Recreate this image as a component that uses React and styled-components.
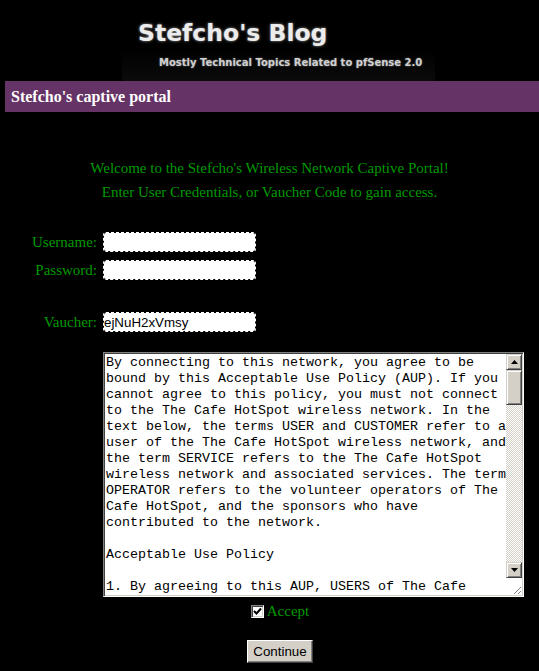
import React from "react";
import styled, { createGlobalStyle } from "styled-components";

const GlobalStyle = createGlobalStyle`
  html, body {
    margin: 0;
    padding: 0;
    background: #000;
  }
  body {
    font-family: "Liberation Serif", "Times New Roman", serif;
  }
`;

const aupText = `By connecting to this network, you agree to be bound by this Acceptable Use Policy (AUP). If you cannot agree to this policy, you must not connect to the The Cafe HotSpot wireless network. In the text below, the terms USER and CUSTOMER refer to a user of the The Cafe HotSpot wireless network, and the term SERVICE refers to the The Cafe HotSpot wireless network and associated services. The term OPERATOR refers to the volunteer operators of The Cafe HotSpot, and the sponsors who have contributed to the network.

Acceptable Use Policy

1. By agreeing to this AUP, USERS of The Cafe`;

function App() {
  return (
    <Page>
      <GlobalStyle />
      <Banner>
        <BannerArt>
          <BlogTitle>Stefcho's Blog</BlogTitle>
          <BlogTagline>Mostly Technical Topics Related to pfSense 2.0</BlogTagline>
        </BannerArt>
      </Banner>

      <PortalBar>Stefcho's captive portal</PortalBar>

      <Welcome>
        Welcome to the Stefcho's Wireless Network Captive Portal!
        <br />
        Enter User Credentials, or Vaucher Code to gain access.
      </Welcome>

      <LoginForm onSubmit={(e) => e.preventDefault()}>
        <FieldLabel>Username:</FieldLabel>
        <TextInput type="text" name="auth_user" />
        <FieldLabel>Password:</FieldLabel>
        <TextInput type="password" name="auth_pass" />
        <FieldLabel $spaced>Vaucher:</FieldLabel>
        <TextInput type="text" name="auth_voucher" defaultValue="ejNuH2xVmsy" $spaced />

        <PolicyBox>
          <PolicyText>{aupText}</PolicyText>
          <ScrollBar>
            <ScrollButton>
              <Arrow viewBox="0 0 7 4">
                <path d="M3.5 0 L7 4 L0 4 Z" />
              </Arrow>
            </ScrollButton>
            <ScrollThumb />
            <ScrollTrack />
            <ScrollButton>
              <Arrow viewBox="0 0 7 4">
                <path d="M0 0 L7 0 L3.5 4 Z" />
              </Arrow>
            </ScrollButton>
            <ResizeCorner>
              <svg width="12" height="12" viewBox="0 0 12 12">
                <path d="M11 4 L4 11 M11 8 L8 11" stroke="#808080" strokeWidth="1" />
              </svg>
            </ResizeCorner>
          </ScrollBar>
        </PolicyBox>
      </LoginForm>

      <Footer>
        <AcceptRow>
          <CheckBox>
            <svg width="9" height="9" viewBox="0 0 9 9">
              <path d="M1 4 L3.5 6.5 L8 1.5" stroke="#000" strokeWidth="2" fill="none" />
            </svg>
          </CheckBox>
          <AcceptLabel>Accept</AcceptLabel>
        </AcceptRow>
        <ContinueButton type="button">Continue</ContinueButton>
      </Footer>
    </Page>
  );
}

const Page = styled.div`
  width: 539px;
  min-height: 671px;
  background: #000;
`;

const Banner = styled.header`
  height: 81px;
  padding-left: 122px;
`;

const BannerArt = styled.div`
  width: 313px;
  height: 81px;
  padding: 20px 0 0 16px;
  box-sizing: border-box;
  background: linear-gradient(to bottom, #000 0%, #000 62%, #0b0b0b 100%);
`;

const BlogTitle = styled.h1`
  margin: 0;
  font-family: "DejaVu Sans", Verdana, sans-serif;
  font-weight: 700;
  font-size: 23.5px;
  line-height: 27px;
  color: #ececec;
  text-shadow: 0 0 3px rgba(255, 255, 255, 0.6);
`;

const BlogTagline = styled.div`
  margin: 10px 0 0 21px;
  font-family: "DejaVu Sans", Verdana, sans-serif;
  font-weight: 700;
  font-size: 10px;
  line-height: 12px;
  color: #cfcfcf;
  text-shadow: 0 0 2px rgba(255, 255, 255, 0.45);
  white-space: nowrap;
`;

const PortalBar = styled.div`
  margin-left: 5px;
  height: 31px;
  padding-left: 6px;
  background: #663366;
  color: #fff;
  font-weight: 700;
  font-size: 16px;
  line-height: 31px;
`;

const Welcome = styled.p`
  margin: 44px 0 0;
  text-align: center;
  color: #009900;
  font-size: 15px;
  line-height: 24px;
`;

const LoginForm = styled.form`
  margin-top: 28px;
  display: grid;
  grid-template-columns: 97px auto;
  column-gap: 6px;
  row-gap: 8px;
  justify-content: start;
  align-items: center;
`;

const FieldLabel = styled.label`
  text-align: right;
  color: #009900;
  font-size: 15px;
  line-height: 20px;
  margin-top: ${(p) => (p.$spaced ? "24px" : "0")};
`;

const TextInput = styled.input`
  width: 153px;
  height: 20px;
  box-sizing: border-box;
  margin: ${(p) => (p.$spaced ? "24px" : "0")} 0 0;
  padding: 0 1px 0 0;
  border: 1px dashed #fff;
  border-radius: 3px;
  background: #fff;
  background-clip: padding-box;
  font-family: "Liberation Sans", Arial, sans-serif;
  font-size: 13.33px;
  color: #000;
  outline: none;
  justify-self: start;
`;

const PolicyBox = styled.div`
  grid-column: 2;
  margin-top: 12px;
  display: flex;
  width: 421px;
  height: 245px;
  box-sizing: border-box;
  border: 1px solid;
  border-color: #808080 #fff #fff #808080;
  box-shadow: inset 1px 1px #404040, inset -1px -1px #d4d0c8;
  padding: 1px;
  background: #fff;
`;

const PolicyText = styled.div`
  width: 401px;
  padding: 1px 0 0 1px;
  overflow: hidden;
  white-space: pre-wrap;
  font-family: "Liberation Mono", "Courier New", monospace;
  font-size: 13.33px;
  line-height: 16px;
  color: #000;
`;

const ScrollBar = styled.div`
  width: 16px;
  display: flex;
  flex-direction: column;
`;

const ScrollButton = styled.div`
  width: 16px;
  height: 16px;
  box-sizing: border-box;
  display: flex;
  align-items: center;
  justify-content: center;
  background: #d4d0c8;
  border: 1px solid;
  border-color: #d4d0c8 #404040 #404040 #d4d0c8;
  box-shadow: inset 1px 1px #fff, inset -1px -1px #808080;
`;

const Arrow = styled.svg`
  width: 7px;
  height: 4px;
  fill: #000;
`;

const ScrollThumb = styled(ScrollButton)`
  height: 35px;
`;

const ScrollTrack = styled.div`
  flex: 1;
  background: repeating-conic-gradient(#fff 0 25%, #d4d0c8 0 50%) 0 0 / 2px 2px;
`;

const ResizeCorner = styled.div`
  height: 17px;
  display: flex;
  align-items: flex-end;
  justify-content: flex-end;
  background: #fff;
`;

const Footer = styled.div`
  padding-left: 21px;
  display: flex;
  flex-direction: column;
  align-items: center;
`;

const AcceptRow = styled.div`
  margin-top: 4px;
  display: flex;
  align-items: center;
  gap: 3px;
  height: 20px;
`;

const CheckBox = styled.span`
  width: 13px;
  height: 13px;
  box-sizing: border-box;
  display: flex;
  align-items: center;
  justify-content: center;
  background: #fff;
  border: 1px solid;
  border-color: #808080 #fff #fff #808080;
  box-shadow: inset 1px 1px #404040, inset -1px -1px #d4d0c8;
`;

const AcceptLabel = styled.span`
  color: #009900;
  font-size: 15px;
  line-height: 20px;
`;

const ContinueButton = styled.button`
  margin-top: 19px;
  width: 66px;
  height: 23px;
  padding: 0;
  background: #d4d0c8;
  border: 1px solid;
  border-color: #fff #404040 #404040 #fff;
  box-shadow: inset -1px -1px #808080;
  font-family: "Liberation Sans", Arial, sans-serif;
  font-size: 13.33px;
  color: #000;
`;

export default App;
